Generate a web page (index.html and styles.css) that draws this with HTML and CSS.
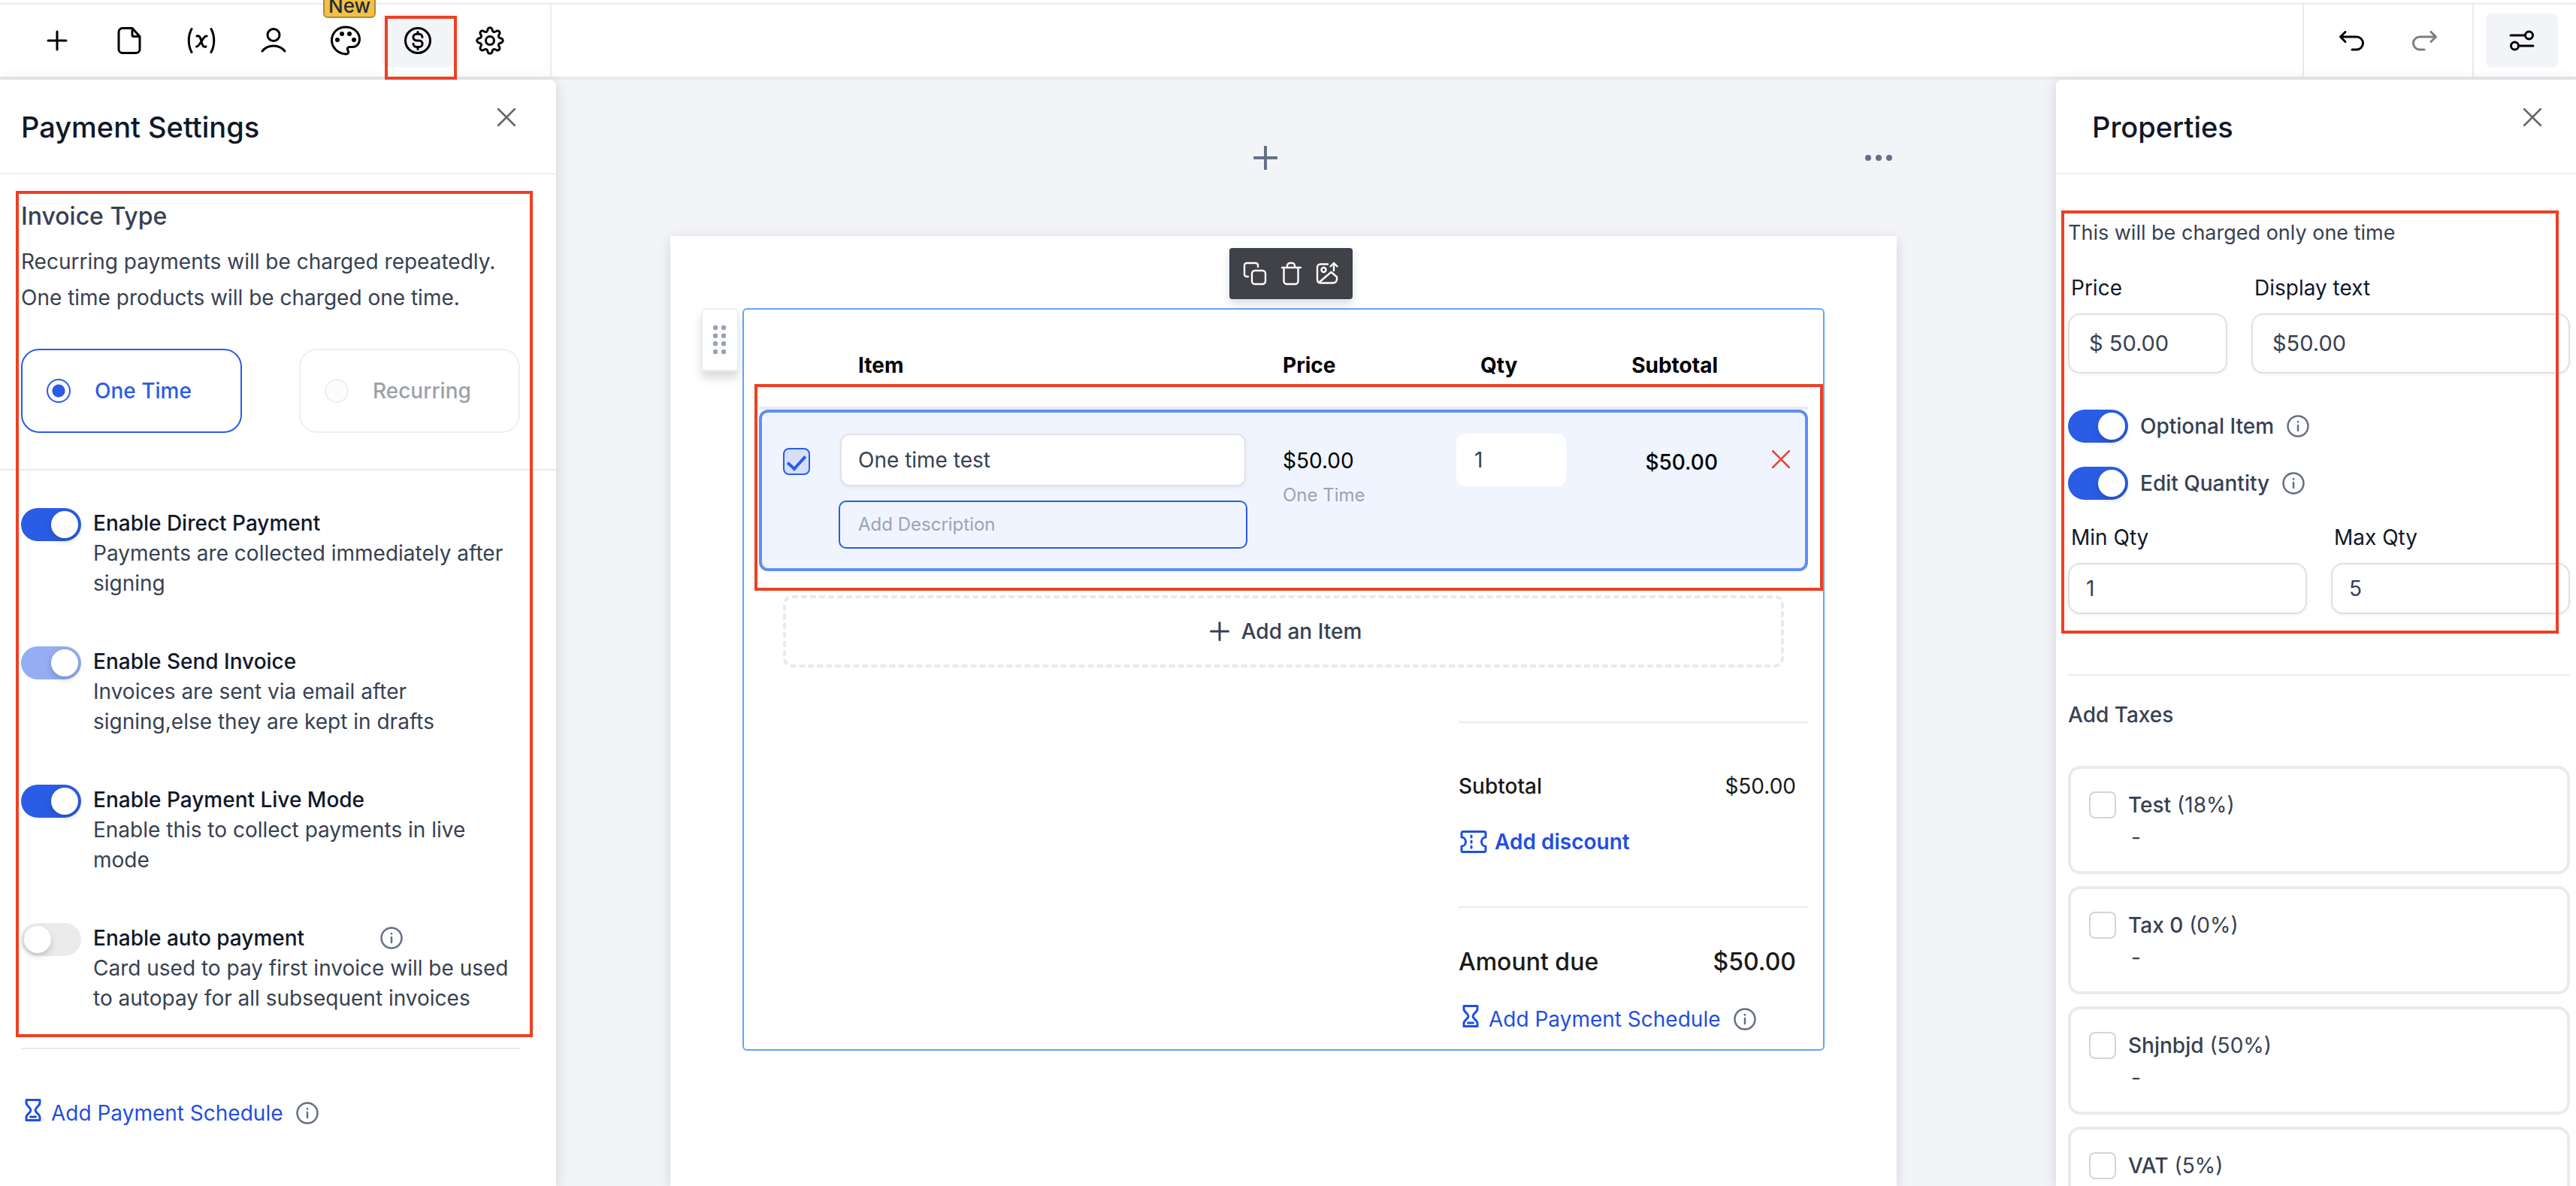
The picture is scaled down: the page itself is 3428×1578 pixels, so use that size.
FILE: index.html
```html
<!DOCTYPE html>
<html lang="en">
<head>
    <meta charset="UTF-8">
    <meta name="viewport" content="width=device-width, initial-scale=1.0">
    <title>Payment Settings</title>
    <link rel="stylesheet" href="styles.css">
</head>
<body>
    <!-- shared icons -->
    <svg class="sprite" aria-hidden="true">
        <symbol id="info" viewBox="0 0 32 32">
            <circle cx="16" cy="16" r="13.5"/>
            <path d="M16 15v7"/>
            <path d="M16 10v.5"/>
        </symbol>
        <symbol id="close" viewBox="0 0 24 24">
            <path d="M1 1l22 22M23 1L1 23"/>
        </symbol>
        <symbol id="hourglass" viewBox="0 0 32 32">
            <path d="M7 2.5h18v4c0 4-6 6-6 9.500s6 5.500 6 9.500v4H7v-4c0-4 6-6 6-9.500s-6-5.500-6-9.500z"/>
            <path d="M12.500 25h7"/>
        </symbol>
    </svg>

    <header class="topbar">
        <nav class="tools">
            <button class="tool" aria-label="Add">
                <svg class="icon" viewBox="0 0 40 40"><path d="M20 8v24M8 20h24"/></svg>
            </button>
            <button class="tool" aria-label="Pages">
                <svg class="icon" viewBox="0 0 40 40"><path d="M24 3.500H11A5 5 0 0 0 6 8.500v23a5 5 0 0 0 5 5h18a5 5 0 0 0 5-5V14.500z"/><path d="M24 4v8.500q0 2 2 2h7.500"/></svg>
            </button>
            <button class="tool" aria-label="Variables">
                <svg class="icon" viewBox="0 0 40 40"><path d="M7 4.500C2 14 2 26 7 35.500M33 4.500c5 9.500 5 21.500 0 31M14 14c3.500-1 4.500 1 6 7s2.500 8 6 7M27 14c-4.500-1-9 14-13.500 14"/></svg>
            </button>
            <button class="tool" aria-label="Recipients">
                <svg class="icon" viewBox="0 0 40 40"><circle cx="20" cy="12.500" r="8"/><path d="M5 34c7-9.500 23-9.500 30 0"/></svg>
            </button>
            <button class="tool" aria-label="Theme">
                <svg class="icon" viewBox="0 0 40 40"><path d="M20 38C9 37 1.500 29 1.500 19.500 1.500 9.500 9.500 2 20 2s18.500 7 18.500 16c0 6-4 10.500-9.500 10.500h-3.500c-3 0-4 2.500-2.500 4.500 1.500 2.500.5 5-3 5z"/><g class="solid"><circle cx="15" cy="11" r="3"/><circle cx="25" cy="11" r="3"/><circle cx="9" cy="19" r="3"/><circle cx="31" cy="19" r="3"/></g></svg>
                <span class="badge">New</span>
            </button>
            <button class="tool active" aria-label="Payments">
                <svg class="icon" viewBox="0 0 40 40"><circle cx="20" cy="20" r="16.500"/><path d="M26 15.500a4.200 4.200 0 0 0-4.200-4.200h-3.600a4.200 4.200 0 0 0 0 8.600h3.600a4.200 4.200 0 0 1 0 8.600h-3.600a4.200 4.200 0 0 1-4.200-4.200M20 8.500v2.500M20 29v2.500"/></svg>
                <span class="mark mark-tool"></span>
            </button>
            <button class="tool" aria-label="Settings">
                <svg class="icon" viewBox="0 0 40 40"><path d="M17.300 4.400A3 3 0 0 1 22.700 4.400Q23.750 10.950 29.100 7.100A3 3 0 0 1 32.900 10.900Q29.050 16.250 35.600 17.300A3 3 0 0 1 35.600 22.700Q29.050 23.750 32.900 29.100A3 3 0 0 1 29.100 32.900Q23.750 29.050 22.700 35.600A3 3 0 0 1 17.300 35.600Q16.250 29.050 10.900 32.900A3 3 0 0 1 7.100 29.100Q10.950 23.750 4.400 22.700A3 3 0 0 1 4.400 17.300Q10.950 16.250 7.100 10.900A3 3 0 0 1 10.900 7.100Q16.250 10.950 17.300 4.400z"/><circle cx="20" cy="20" r="5.500"/></svg>
            </button>
        </nav>
        <div class="history">
            <button class="tool" aria-label="Undo">
                <svg class="icon" viewBox="0 0 40 40"><path d="M11 8.500L4.500 15l6.500 6.500M5 15h21a8.500 8.500 0 0 1 0 17h-6"/></svg>
            </button>
            <button class="tool" aria-label="Redo" disabled>
                <svg class="icon" viewBox="0 0 40 40"><path d="M29 8.500l6.500 6.500-6.500 6.500M35 15H14a8.500 8.500 0 0 0 0 17h6"/></svg>
            </button>
        </div>
        <div class="view">
            <button class="tool active" aria-label="Properties">
                <svg class="icon" viewBox="0 0 40 40"><path d="M5 13h19M16 27h19"/><circle cx="29.500" cy="13" r="5"/><circle cx="10.500" cy="27" r="5"/></svg>
            </button>
        </div>
    </header>

    <div class="workspace">
        <aside class="panel panel-left">
            <div class="panel-header">
                <h2>Payment Settings</h2>
                <button class="close" aria-label="Close"><svg><use href="#close"/></svg></button>
            </div>
            <div class="settings">
                <section class="invoice-type">
                    <h3>Invoice Type</h3>
                    <p>Recurring payments will be charged repeatedly.<br>One time products will be charged one time.</p>
                    <div class="type-options">
                        <label class="type-card selected"><input type="radio" name="type" checked>One Time</label>
                        <label class="type-card"><input type="radio" name="type" disabled>Recurring</label>
                    </div>
                </section>
                <section class="switches">
                    <div class="switch-row">
                        <input class="switch" type="checkbox" id="direct" checked>
                        <div>
                            <label for="direct">Enable Direct Payment</label>
                            <p>Payments are collected immediately after signing</p>
                        </div>
                    </div>
                    <div class="switch-row">
                        <input class="switch" type="checkbox" id="send" checked disabled>
                        <div>
                            <label for="send">Enable Send Invoice</label>
                            <p>Invoices are sent via email after signing,else they are kept in drafts</p>
                        </div>
                    </div>
                    <div class="switch-row">
                        <input class="switch" type="checkbox" id="live" checked>
                        <div>
                            <label for="live">Enable Payment Live Mode</label>
                            <p>Enable this to collect payments in live mode</p>
                        </div>
                    </div>
                    <div class="switch-row">
                        <input class="switch" type="checkbox" id="auto">
                        <div>
                            <div class="switch-title">
                                <label for="auto">Enable auto payment</label>
                                <svg class="info"><use href="#info"/></svg>
                            </div>
                            <p>Card used to pay first invoice will be used to autopay for all subsequent invoices</p>
                        </div>
                    </div>
                </section>
                <span class="mark mark-settings"></span>
            </div>
            <div class="panel-footer">
                <div class="schedule">
                    <a href="#"><svg class="hourglass"><use href="#hourglass"/></svg>Add Payment Schedule</a>
                    <svg class="info"><use href="#info"/></svg>
                </div>
            </div>
        </aside>

        <main class="canvas">
            <div class="page-actions">
                <button class="add-page" aria-label="Add page"><svg viewBox="0 0 32 32"><path d="M16 1.500v29M1.500 16h29"/></svg></button>
                <button class="more" aria-label="More"><svg viewBox="0 0 48 32"><circle cx="10" cy="16" r="4"/><circle cx="24" cy="16" r="4"/><circle cx="38" cy="16" r="4"/></svg></button>
            </div>
            <div class="page">
                <div class="block">
                    <div class="block-tools">
                        <button aria-label="Duplicate"><svg viewBox="0 0 32 32"><rect x="12" y="12" width="18" height="18" rx="4"/><path d="M7 20H5a3 3 0 0 1-3-3V5a3 3 0 0 1 3-3h12a3 3 0 0 1 3 3v2"/></svg></button>
                        <button aria-label="Delete"><svg viewBox="0 0 32 32"><path d="M4 8h25M6.500 8v18a4 4 0 0 0 4 4h11a4 4 0 0 0 4-4V8M11 8V5.500A3.500 3.500 0 0 1 14.500 2h3A3.500 3.500 0 0 1 21 5.500V8"/></svg></button>
                        <button aria-label="Background"><svg viewBox="0 0 32 32"><path d="M17 3.500H7a4 4 0 0 0-4 4v17a4 4 0 0 0 4 4h17a5 5 0 0 0 5-5v-3L21.500 14 5 28M25 12V2M20.500 6.500L25 2l4.500 4.500"/><circle cx="11.500" cy="11" r="3"/></svg></button>
                    </div>
                    <button class="drag" aria-label="Move"><svg viewBox="0 0 20 40"><circle cx="4" cy="4" r="3.200"/><circle cx="15" cy="4" r="3.200"/><circle cx="4" cy="14.700" r="3.200"/><circle cx="15" cy="14.700" r="3.200"/><circle cx="4" cy="25.300" r="3.200"/><circle cx="15" cy="25.300" r="3.200"/><circle cx="4" cy="36" r="3.200"/><circle cx="15" cy="36" r="3.200"/></svg></button>

                    <table class="items">
                        <thead>
                            <tr>
                                <th class="col-check"></th>
                                <th class="col-item">Item</th>
                                <th class="col-price">Price</th>
                                <th class="col-qty">Qty</th>
                                <th class="col-subtotal">Subtotal</th>
                                <th class="col-remove"></th>
                            </tr>
                        </thead>
                        <tbody>
                            <tr>
                                <td class="col-check"><input class="check" type="checkbox" aria-label="Include item" checked></td>
                                <td class="col-item">
                                    <input class="name" type="text" aria-label="Item name" value="One time test">
                                    <input class="description" type="text" aria-label="Description" placeholder="Add Description">
                                </td>
                                <td class="col-price">$50.00<small>One Time</small></td>
                                <td class="col-qty"><input class="qty" type="text" aria-label="Quantity" value="1"></td>
                                <td class="col-subtotal">$50.00</td>
                                <td class="col-remove"><button aria-label="Remove item"><svg><use href="#close"/></svg></button></td>
                            </tr>
                        </tbody>
                    </table>

                    <button class="add-item"><svg viewBox="0 0 26 26"><path d="M13 1.500v23M1.500 13h23"/></svg>Add an Item</button>

                    <div class="totals">
                        <div class="total-group">
                            <div class="total-row"><b>Subtotal</b><span>$50.00</span></div>
                            <a class="discount" href="#"><svg viewBox="0 0 36 32"><path d="M4 2.500h28a2 2 0 0 1 2 2V10c-3 0-5.500 2.500-5.500 6s2.500 6 5.500 6v5.500a2 2 0 0 1-2 2H4a2 2 0 0 1-2-2V22c3 0 5.500-2.500 5.500-6S5 10 2 10V4.500a2 2 0 0 1 2-2z"/><path d="M15 8v2M15 15v2M15 22v2"/></svg>Add discount</a>
                        </div>
                        <div class="due-group">
                            <div class="total-row due"><b>Amount due</b><span>$50.00</span></div>
                            <div class="schedule">
                                <a href="#"><svg class="hourglass"><use href="#hourglass"/></svg>Add Payment Schedule</a>
                                <svg class="info"><use href="#info"/></svg>
                            </div>
                        </div>
                    </div>
                    <span class="mark mark-row"></span>
                </div>
            </div>
        </main>

        <aside class="panel panel-right">
            <div class="panel-header">
                <h2>Properties</h2>
                <button class="close" aria-label="Close"><svg><use href="#close"/></svg></button>
            </div>
            <section class="properties">
                <p>This will be charged only one time</p>
                <div class="fields price-fields">
                    <div class="field">
                        <label for="price">Price</label>
                        <input type="text" id="price" value="$ 50.00">
                    </div>
                    <div class="field">
                        <label for="display">Display text</label>
                        <input type="text" id="display" value="$50.00">
                    </div>
                </div>
                <div class="option">
                    <input class="switch" type="checkbox" id="optional" checked>
                    <label for="optional">Optional Item</label>
                    <svg class="info"><use href="#info"/></svg>
                </div>
                <div class="option">
                    <input class="switch" type="checkbox" id="edit" checked>
                    <label for="edit">Edit Quantity</label>
                    <svg class="info"><use href="#info"/></svg>
                </div>
                <div class="fields qty-fields">
                    <div class="field">
                        <label for="min">Min Qty</label>
                        <input type="text" id="min" value="1">
                    </div>
                    <div class="field">
                        <label for="max">Max Qty</label>
                        <input type="text" id="max" value="5">
                    </div>
                </div>
                <span class="mark mark-properties"></span>
            </section>
            <section class="taxes">
                <h4>Add Taxes</h4>
                <div class="tax">
                    <label><input class="check" type="checkbox"><span><b>Test</b> (18%)</span></label>
                    <p>-</p>
                </div>
                <div class="tax">
                    <label><input class="check" type="checkbox"><span><b>Tax 0</b> (0%)</span></label>
                    <p>-</p>
                </div>
                <div class="tax">
                    <label><input class="check" type="checkbox"><span><b>Shjnbjd</b> (50%)</span></label>
                    <p>-</p>
                </div>
                <div class="tax">
                    <label><input class="check" type="checkbox"><span><b>VAT</b> (5%)</span></label>
                </div>
            </section>
        </aside>
    </div>
</body>
</html>
```

FILE: styles.css
```css
* {
    box-sizing: border-box;
}
body {
    margin: 0;
    height: 100vh;
    overflow: hidden;
    display: flex;
    flex-direction: column;
    font-family: Inter, "Liberation Sans", sans-serif;
    font-size: 28px;
    line-height: 40px;
    color: #374151;
    background: #fff;
}
h2, h3, h4, p {
    margin: 0;
}
b {
    font-weight: 500;
}
button, input {
    font: inherit;
    color: inherit;
    margin: 0;
}
button {
    padding: 0;
    border: 0;
    background: none;
    cursor: pointer;
}
input[type="text"] {
    width: 100%;
    min-width: 0;
    display: block;
    outline: none;
}
a {
    color: #1f4fe3;
    text-decoration: none;
}
svg {
    display: block;
    flex: none;
    fill: none;
    stroke: currentColor;
    stroke-width: 3;
    stroke-linecap: round;
    stroke-linejoin: round;
}
.sprite {
    display: none;
}
.info {
    width: 32px;
    height: 32px;
    color: #667085;
    stroke-width: 2.5;
}
.hourglass {
    width: 32px;
    height: 32px;
}

/* red outlines around the areas being explained */
.mark {
    position: absolute;
    border: 4px solid #ed4024;
    pointer-events: none;
}

/* top bar */
.topbar {
    flex: none;
    display: flex;
    margin-top: 4px;
    border-top: 2px solid #e9eaef;
    border-bottom: 4px solid #e9eaee;
    color: #000;
}
.tools {
    display: flex;
    padding: 12px 32px 12px 28px;
    border-right: 2px solid #e9eaef;
}
.tool {
    position: relative;
    width: 96px;
    height: 72px;
    display: flex;
    align-items: center;
    justify-content: center;
    border-radius: 8px;
}
.tool.active {
    background: #f2f4f8;
}
.tool:disabled {
    color: #000;
    opacity: 0.5;
}
.icon {
    width: 40px;
    height: 40px;
}
.solid {
    fill: currentColor;
    stroke: none;
}
.badge {
    position: absolute;
    top: -30px;
    left: 18px;
    padding: 4px 5px 0;
    border: 2px solid #b28b33;
    border-radius: 6px;
    background: #f4bf42;
    color: #1d2f3d;
    font-size: 26px;
    font-weight: 500;
    line-height: 28px;
}
.mark-tool {
    top: 3px;
    left: 4px;
    width: 96px;
    height: 85px;
    z-index: 2;
}
.history {
    display: flex;
    margin-left: auto;
    padding: 12px 16px;
    border-left: 2px solid #e9eaef;
}
.view {
    padding: 12px 24px 12px 16px;
    border-left: 2px solid #e9eaef;
}

/* panels */
.workspace {
    flex: 1;
    min-height: 0;
    display: flex;
    background: #f3f4f8;
}
.panel {
    flex: none;
    background: #fff;
    overflow: hidden;
    box-shadow: 0 4px 20px rgba(16, 24, 40, 0.15);
}
.panel-left {
    width: 740px;
    border-top-right-radius: 8px;
}
.panel-right {
    width: 692px;
    border-top-left-radius: 8px;
}
.panel-header {
    display: flex;
    justify-content: space-between;
    align-items: flex-start;
    padding: 38px 54px 36px 28px;
    border-bottom: 2px solid #eeeff3;
}
.panel-right .panel-header {
    padding: 38px 46px 36px 48px;
}
h2 {
    font-size: 38px;
    font-weight: 500;
    line-height: 50px;
    color: #101828;
}
.close {
    color: #666;
}
.close svg {
    width: 24px;
    height: 24px;
    stroke-width: 2.5;
}

/* payment settings */
.settings {
    position: relative;
}
.mark-settings {
    top: 22px;
    bottom: 14px;
    left: 21px;
    right: 31px;
}
.invoice-type {
    padding: 36px 48px 48px 28px;
    border-bottom: 2px solid #e9eaef;
}
.invoice-type h3 {
    font-size: 32px;
    font-weight: 500;
}
.invoice-type p {
    margin-top: 16px;
    line-height: 48px;
}
.type-options {
    display: grid;
    grid-template-columns: 1fr 1fr;
    gap: 76px;
    margin-top: 44px;
}
.type-card {
    display: flex;
    align-items: center;
    gap: 32px;
    padding: 34px 32px;
    border: 2px solid #efeff2;
    border-radius: 24px;
    font-weight: 500;
    color: #9ca0aa;
}
.type-card.selected {
    border-color: #2b5ce6;
    color: #2b5ce6;
}
.type-card input {
    appearance: none;
    width: 32px;
    height: 32px;
    border: 2px solid #efeff2;
    border-radius: 50%;
    background: #fcfcfd;
}
.type-card input:checked {
    border-color: #2b5ce6;
    background: radial-gradient(circle, #2b5ce6 8px, #fff 9px);
}
.switches {
    display: flex;
    flex-direction: column;
    gap: 64px;
    padding: 50px 48px 46px 28px;
}
.switch-row {
    display: flex;
    align-items: flex-start;
    gap: 16px;
}
.switch-row label {
    font-weight: 500;
    color: #101828;
}
.switch-title {
    display: flex;
    align-items: center;
    gap: 100px;
}
.switch {
    appearance: none;
    flex: none;
    width: 80px;
    height: 44px;
    padding: 4px;
    border-radius: 22px;
    background: #ebebeb;
    cursor: pointer;
}
.switch::before {
    content: "";
    display: block;
    width: 36px;
    height: 36px;
    border-radius: 50%;
    background: #fff;
    box-shadow: 0 4px 8px rgba(0, 35, 11, 0.2);
}
.switch:checked {
    background: #2b5ce6;
}
.switch:checked::before {
    margin-left: auto;
}
.switch:checked:disabled {
    background: #95adf2;
}
.panel-footer {
    margin: 0 48px 0 28px;
    padding-top: 65px;
    border-top: 2px solid #e9eaef;
}
.schedule {
    display: flex;
    align-items: center;
    gap: 16px;
}
.schedule a {
    display: flex;
    gap: 8px;
}

/* document */
.canvas {
    flex: 1;
    min-width: 0;
    display: flex;
    flex-direction: column;
    padding: 0 212px 0 152px;
}
.page-actions {
    flex: none;
    display: flex;
    align-items: center;
    padding: 88px 0;
    color: #667085;
}
.add-page {
    flex: 1;
}
.add-page svg {
    width: 32px;
    height: 32px;
    margin: 0 auto;
    stroke-width: 4;
}
.more svg {
    width: 48px;
    height: 32px;
    fill: currentColor;
    stroke: none;
}
.page {
    flex: 1;
    padding: 96px;
    background: #fff;
    box-shadow: 0 4px 16px rgba(16, 24, 40, 0.15);
}
.block {
    position: relative;
    padding: 0 20px 20px;
    border: 2px solid #60a5fa;
    border-radius: 6px;
}
.block-tools {
    position: absolute;
    top: -82px;
    left: calc(50% - 72px);
    display: flex;
    gap: 16px;
    padding: 16px;
    border: 2px solid #374151;
    border-radius: 4px;
    background: #414247;
    color: #fff;
    box-shadow: 0 6px 12px rgba(16, 24, 40, 0.15);
}
.block-tools svg {
    width: 32px;
    height: 32px;
    stroke-width: 2.4;
}
.drag {
    position: absolute;
    top: -2px;
    left: -57px;
    padding: 20px 13px;
    border: 2px solid #eceef0;
    border-radius: 6px;
    background: #fff;
    box-shadow: 0 10px 12px rgba(16, 24, 40, 0.15);
}
.drag svg {
    width: 20px;
    height: 40px;
    fill: #98a2b3;
    stroke: none;
}
.mark-row {
    top: 99px;
    left: 14px;
    right: 0;
    height: 275px;
}

/* line items */
.items {
    width: 100%;
    table-layout: fixed;
    border-spacing: 0;
    color: #000;
}
.items th {
    padding: 54px 0 35px;
    border-bottom: 4px solid #e9eaee;
    font-weight: 700;
    text-align: left;
}
.items td {
    padding: 28px 0 26px;
    border: 0 solid #5f8df8;
    border-width: 4px 0;
    background: #eff4ff;
    vertical-align: top;
}
.items td:first-child {
    border-left-width: 4px;
    border-radius: 12px 0 0 12px;
}
.items td:last-child {
    border-right-width: 4px;
    border-radius: 0 12px 12px 0;
}
.items .col-check {
    width: 106px;
}
.items td.col-check {
    padding: 47px 0 0 28px;
}
.items th.col-item {
    padding-left: 26px;
}
.items td.col-item {
    padding-right: 47px;
}
.items .col-price {
    width: 231px;
}
.items td.col-price {
    padding-top: 44px;
}
.items small {
    display: block;
    margin-top: 6px;
    font-size: 24px;
    color: #9ca3b4;
}
.items .col-qty {
    width: 146px;
}
.items th.col-qty {
    padding-left: 32px;
}
.items .col-subtotal {
    width: 202px;
    text-align: right;
}
.items td.col-subtotal {
    padding-top: 46px;
    font-weight: 500;
}
.items .col-remove {
    width: 120px;
}
.items td.col-remove {
    padding: 50px 20px 0 0;
}
.col-remove button {
    display: block;
    margin-left: auto;
    color: #e5493a;
}
.col-remove svg {
    width: 24px;
    height: 24px;
    stroke-width: 2.5;
}
.check {
    appearance: none;
    display: block;
    flex: none;
    width: 36px;
    height: 36px;
    border: 2px solid #d0d5dd;
    border-radius: 8px;
    background: #fff;
}
.check:checked {
    border-color: #2b5ce6;
    background: #d5dffb;
}
.check:checked::before {
    content: "";
    display: block;
    width: 10px;
    height: 20px;
    margin: 3px auto 0;
    border: solid #2b5ce6;
    border-width: 0 4px 4px 0;
    transform: rotate(42deg);
}
.items .name, .qty {
    padding: 13px 22px;
    border: 2px solid #e2e3e6;
    border-radius: 12px;
    background: #fff;
    color: #374151;
}
.items .name {
    width: calc(100% - 4px);
    margin: 0 2px 19px;
    box-shadow: 0 2px 4px rgba(16, 24, 40, 0.05);
}
.items .qty {
    border-color: #fff;
}
.description {
    padding: 10px 24px;
    border: 2px solid #2b5ce6;
    border-radius: 10px;
    background: #eff4ff;
    font-size: 24px;
}
.description::placeholder {
    color: #9ca3b4;
}
.add-item {
    display: flex;
    align-items: center;
    justify-content: center;
    gap: 16px;
    width: calc(100% - 64px);
    margin: 32px 32px 72px;
    padding: 24px 20px 24px 26px;
    border: 4px dashed #e9eaee;
    border-radius: 12px;
    font-weight: 500;
}
.add-item svg {
    width: 26px;
    height: 26px;
}

/* totals */
.totals {
    width: 465px;
    margin-left: auto;
    color: #1a1a1a;
}
.total-group {
    display: flex;
    flex-direction: column;
    gap: 34px;
    padding: 64px 0 66px;
    border: solid #e9eaef;
    border-width: 2px 0;
}
.total-row {
    display: flex;
    justify-content: space-between;
    padding-right: 16px;
}
.discount {
    display: flex;
    align-items: center;
    gap: 10px;
    padding-left: 2px;
    font-weight: 600;
}
.discount svg {
    width: 36px;
    height: 32px;
}
.due-group {
    display: flex;
    flex-direction: column;
    gap: 36px;
    padding-top: 52px;
}
.due {
    font-size: 32px;
    font-weight: 500;
}

/* properties */
.properties {
    position: relative;
    padding: 58px 8px 80px 16px;
}
.properties p {
    font-size: 27px;
}
.mark-properties {
    top: 48px;
    bottom: 54px;
    left: 7px;
    right: 23px;
}
.fields {
    display: grid;
    gap: 32px;
    color: #101828;
}
.price-fields {
    grid-template-columns: 1fr 2fr;
    margin: 33px 0 48px;
}
.qty-fields {
    grid-template-columns: 1fr 1fr;
    margin-top: 30px;
}
.field label {
    display: block;
    margin-bottom: 14px;
    padding-left: 4px;
}
.field input {
    padding: 12px 22px;
    border: 2px solid #dfe0e6;
    border-radius: 16px;
    background: #fff;
    color: #374151;
    box-shadow: 0 2px 4px rgba(16, 24, 40, 0.05);
}
.price-fields input {
    padding: 18px 26px;
    font-size: 29px;
}
.option {
    display: flex;
    align-items: center;
    gap: 16px;
    font-weight: 500;
}
.option + .option {
    margin-top: 32px;
}
.taxes {
    display: flex;
    flex-direction: column;
    gap: 16px;
    margin: 0 8px 0 16px;
    padding-top: 32px;
    border-top: 2px solid #e9eaef;
}
h4 {
    margin-bottom: 32px;
    font-size: 28px;
    font-weight: 500;
}
.tax {
    padding: 28px 24px 22px;
    border: 4px solid #e9eaef;
    border-radius: 16px;
}
.tax:last-child {
    padding-bottom: 68px;
}
.tax label {
    display: flex;
    align-items: center;
    gap: 16px;
}
.tax p {
    padding-left: 56px;
    line-height: 46px;
}
```
